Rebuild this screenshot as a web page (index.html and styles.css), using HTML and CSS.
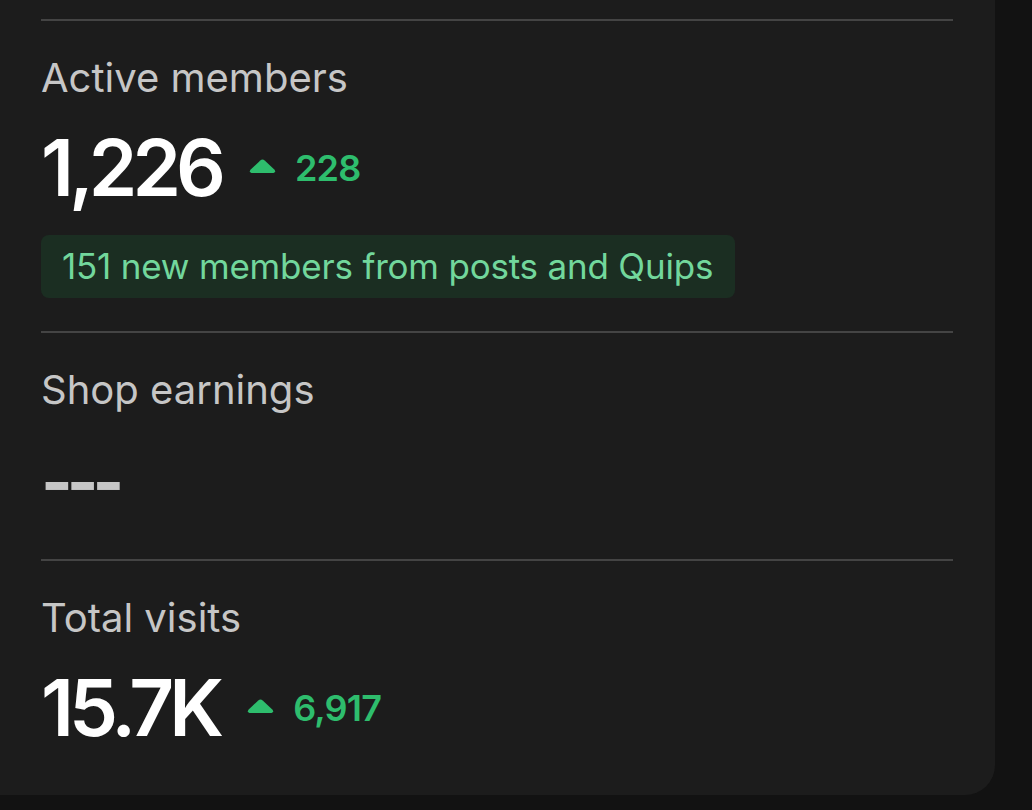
FILE: index.html
```html
<!DOCTYPE html>
<html lang="en">
<head>
<meta charset="utf-8">
<title>Insights</title>
<link rel="stylesheet" href="styles.css">
</head>
<body>
<div class="card">
  <section class="stat">
    <div class="label">Active members</div>
    <div class="value-row">
      <span class="value">1,226</span>
      <svg class="up" width="27" height="14" viewBox="0 0 27 14" aria-hidden="true"><path d="M11.3 1.4 Q13.5 -0.6 15.7 1.4 L25.3 10.6 Q27.3 12.8 24.6 14 L2.4 14 Q-0.3 12.8 1.7 10.6 Z" fill="#2ebd6d"/></svg>
      <span class="delta">228</span>
    </div>
    <div class="badge">151 new members from posts and Quips</div>
  </section>
  <section class="stat">
    <div class="label">Shop earnings</div>
    <div class="empty">---</div>
  </section>
  <section class="stat last">
    <div class="label">Total visits</div>
    <div class="value-row">
      <span class="value">15.7K</span>
      <svg class="up" width="27" height="14" viewBox="0 0 27 14" aria-hidden="true"><path d="M11.3 1.4 Q13.5 -0.6 15.7 1.4 L25.3 10.6 Q27.3 12.8 24.6 14 L2.4 14 Q-0.3 12.8 1.7 10.6 Z" fill="#2ebd6d"/></svg>
      <span class="delta">6,917</span>
    </div>
  </section>
</div>
</body>
</html>
```
FILE: styles.css
```css
html, body {
  margin: 0;
  padding: 0;
  background: #121212;
}
body {
  font-family: Inter, "Noto Sans", "Liberation Sans", sans-serif;
  width: 1032px;
  height: 810px;
  overflow: hidden;
}
.card {
  box-sizing: border-box;
  width: 1036px;
  margin-left: -41px;
  padding: 19px 42px 48px 82px;
  background: #1c1c1c;
  border-radius: 0 0 30px 0;
}
.stat {
  border-top: 2px solid #444444;
  padding-top: 33px;
  padding-bottom: 33px;
}
.stat.last {
  padding-bottom: 0;
}
.label {
  font-size: 40px;
  line-height: 48px;
  color: #c6c6c6;
  letter-spacing: 0;
}
.value-row {
  display: flex;
  align-items: center;
  margin-top: 27px;
}
.value {
  font-size: 78px;
  line-height: 78px;
  font-weight: 600;
  color: #ffffff;
  letter-spacing: -5px;
}
.up {
  margin-left: 28px;
  margin-top: -5px;
  flex: none;
}
.delta {
  margin-left: 19px;
  font-size: 36px;
  line-height: 36px;
  font-weight: 600;
  color: #2ebd6d;
  letter-spacing: -0.8px;
}
.badge {
  display: inline-block;
  margin-top: 28px;
  height: 63px;
  line-height: 63px;
  padding: 0 22px 0 21px;
  border-radius: 8px;
  background: #1b2e22;
  color: #72d79c;
  font-size: 35px;
  letter-spacing: -0.2px;
}
.empty {
  margin-top: 31px;
  font-size: 68px;
  line-height: 72px;
  font-weight: 700;
  color: #c6c6c6;
  letter-spacing: -6px;
  height: 72px;
  padding-bottom: 9px;
}
```
